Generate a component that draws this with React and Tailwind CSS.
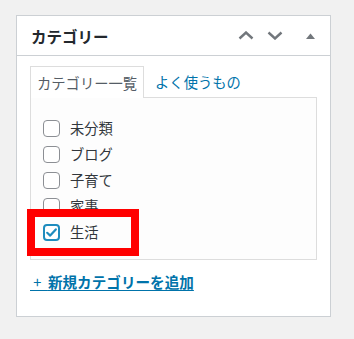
import React from "react";

const jp = { fontFamily: '"Noto Sans CJK JP", "Noto Sans", sans-serif' };

const categories = [
  { name: "未分類", checked: false },
  { name: "ブログ", checked: false },
  { name: "子育て", checked: false },
  { name: "家事", checked: false },
  { name: "生活", checked: true },
];

function Checkbox({ checked }) {
  if (checked) {
    return (
      <span className="w-[17px] h-[17px] rounded-[4px] border-[2px] border-[#1e8cbe] bg-white flex items-center justify-center flex-shrink-0">
        <svg width="13" height="13" viewBox="0 0 13 13">
          <path d="M2.2 6.8 L5.2 9.6 L10.8 3.4" fill="none" stroke="#1e8cbe" strokeWidth="2.2" strokeLinecap="round" strokeLinejoin="round" />
        </svg>
      </span>
    );
  }
  return <span className="w-[17px] h-[17px] rounded-[4px] border border-[#8c8f94] bg-white flex-shrink-0" />;
}

export default function App() {
  return (
    <div className="relative w-[354px] h-[339px] bg-[#f1f1f1] pt-[15px] pl-[16px]" style={jp}>
      {/* Category metabox */}
      <div className="w-[315px] h-[302px] border border-[#ccd0d4] bg-white">
        {/* Header */}
        <div className="h-[40px] border-b border-[#ccd0d4] flex items-center pl-[14px] pr-[15px]">
          <h2 className="text-[15.5px] leading-[20px] font-bold text-[#23282d]">カテゴリー</h2>
          <div className="ml-auto flex items-center">
            <svg width="16" height="9" viewBox="0 0 16 9">
              <path d="M1.5 7.5 L8 1.5 L14.5 7.5" fill="none" stroke="#72777c" strokeWidth="2.4" />
            </svg>
            <svg className="ml-[13px]" width="16" height="9" viewBox="0 0 16 9">
              <path d="M1.5 1.5 L8 7.5 L14.5 1.5" fill="none" stroke="#72777c" strokeWidth="2.4" />
            </svg>
            <svg className="ml-[23px]" width="9" height="6" viewBox="0 0 9 6">
              <path d="M0 6 L4.5 0.5 L9 6 Z" fill="#72777c" />
            </svg>
          </div>
        </div>

        {/* Body */}
        <div className="pt-[10px] px-[13px]">
          {/* Tabs */}
          <div className="flex items-start h-[31px]">
            <div className="relative z-10 h-[32px] border border-b-0 border-[#dddddd] bg-white px-[6px] flex items-center text-[14.3px] leading-[20px] text-[#555d66]">
              カテゴリー一覧
            </div>
            <div className="ml-[11px] h-[31px] flex items-center text-[14.3px] leading-[20px] text-[#0073aa]">
              よく使うもの
            </div>
          </div>

          {/* Category list */}
          <div className="h-[163px] border border-[#dddddd] bg-[#fdfdfd] pt-[17px] pl-[12px]">
            {categories.map((c) => (
              <div key={c.name} className="h-[26px] flex items-center gap-[10px]">
                <Checkbox checked={c.checked} />
                <span className="text-[14.3px] leading-[20px] text-[#32373c]">{c.name}</span>
              </div>
            ))}
          </div>

          {/* Add new */}
          <div className="mt-[12px] text-[14.6px] leading-[20px]">
            <a href="#" className="text-[#0073aa] underline underline-offset-[2px] font-semibold">
              <span className="font-normal">{"\u00a0+\u00a0\u00a0"}</span>新規カテゴリーを追加
            </a>
          </div>
        </div>
      </div>

      {/* Red highlight annotation */}
      <div className="absolute left-[27px] top-[209px] w-[112px] h-[47px] border-[8px] border-[#ff0000]" />
    </div>
  );
}
